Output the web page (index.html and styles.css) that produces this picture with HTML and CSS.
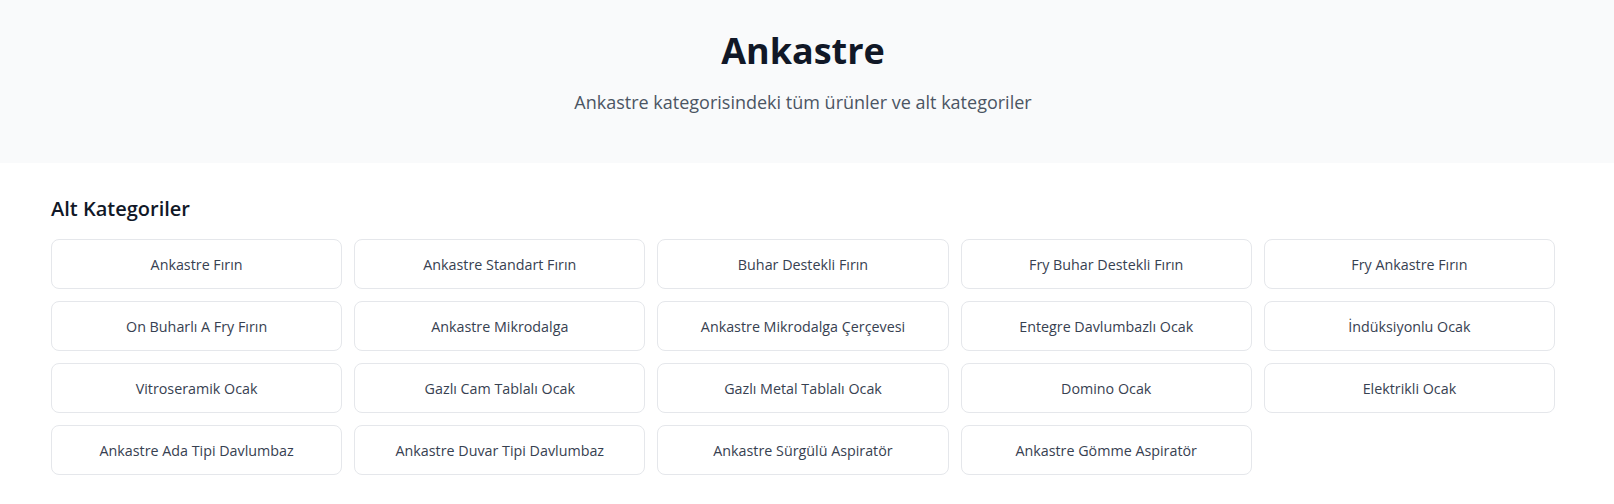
FILE: index.html
```html
<!DOCTYPE html>
<html lang="tr">
<head>
<meta charset="utf-8">
<title>Ankastre</title>
<link rel="stylesheet" href="styles.css">
</head>
<body>
<header class="hero">
  <div class="hero-inner">
    <h1 class="hero-title">Ankastre</h1>
    <p class="hero-sub">Ankastre kategorisindeki tüm ürünler ve alt kategoriler</p>
  </div>
</header>
<main class="page">
  <section class="container">
    <h2 class="section-title">Alt Kategoriler</h2>
    <div class="grid">
      <a class="card" href="#">Ankastre Fırın</a>
      <a class="card" href="#">Ankastre Standart Fırın</a>
      <a class="card" href="#">Buhar Destekli Fırın</a>
      <a class="card" href="#">Fry Buhar Destekli Fırın</a>
      <a class="card" href="#">Fry Ankastre Fırın</a>
      <a class="card" href="#">On Buharlı A Fry Fırın</a>
      <a class="card" href="#">Ankastre Mikrodalga</a>
      <a class="card" href="#">Ankastre Mikrodalga Çerçevesi</a>
      <a class="card" href="#">Entegre Davlumbazlı Ocak</a>
      <a class="card" href="#">İndüksiyonlu Ocak</a>
      <a class="card" href="#">Vitroseramik Ocak</a>
      <a class="card" href="#">Gazlı Cam Tablalı Ocak</a>
      <a class="card" href="#">Gazlı Metal Tablalı Ocak</a>
      <a class="card" href="#">Domino Ocak</a>
      <a class="card" href="#">Elektrikli Ocak</a>
      <a class="card" href="#">Ankastre Ada Tipi Davlumbaz</a>
      <a class="card" href="#">Ankastre Duvar Tipi Davlumbaz</a>
      <a class="card" href="#">Ankastre Sürgülü Aspiratör</a>
      <a class="card" href="#">Ankastre Gömme Aspiratör</a>
    </div>
  </section>
</main>
</body>
</html>
```
FILE: styles.css
```css
* { box-sizing: border-box; }
html, body { margin: 0; padding: 0; }
body {
  font-family: "Open Sans", "Noto Sans", sans-serif;
  background: #ffffff;
  color: #111827;
}
.hero {
  background: #f9fafb;
  height: 163px;
  padding-right: 8px;
}
.hero-inner {
  padding-top: 31px;
  text-align: center;
}
.hero-title {
  margin: 0;
  font-size: 36px;
  line-height: 40px;
  font-weight: 700;
  color: #111827;
}
.hero-sub {
  margin: 17px 0 0;
  font-size: 18px;
  line-height: 28px;
  color: #4b5563;
}
.page {
  padding-right: 8px;
}
.container {
  max-width: 1536px;
  margin: 0 auto;
  padding: 32px 16px;
}
.section-title {
  margin: 0 0 16px;
  font-size: 20px;
  line-height: 28px;
  font-weight: 600;
  color: #111827;
}
.grid {
  display: grid;
  grid-template-columns: repeat(5, 1fr);
  gap: 12px;
}
.card {
  display: block;
  height: 50px;
  padding: 15px 16px 13px;
  border: 1px solid #e5e7eb;
  border-radius: 8px;
  background: #fff;
  text-align: center;
  font-size: 14.3px;
  line-height: 20px;
  color: #374151;
  text-decoration: none;
}
```
